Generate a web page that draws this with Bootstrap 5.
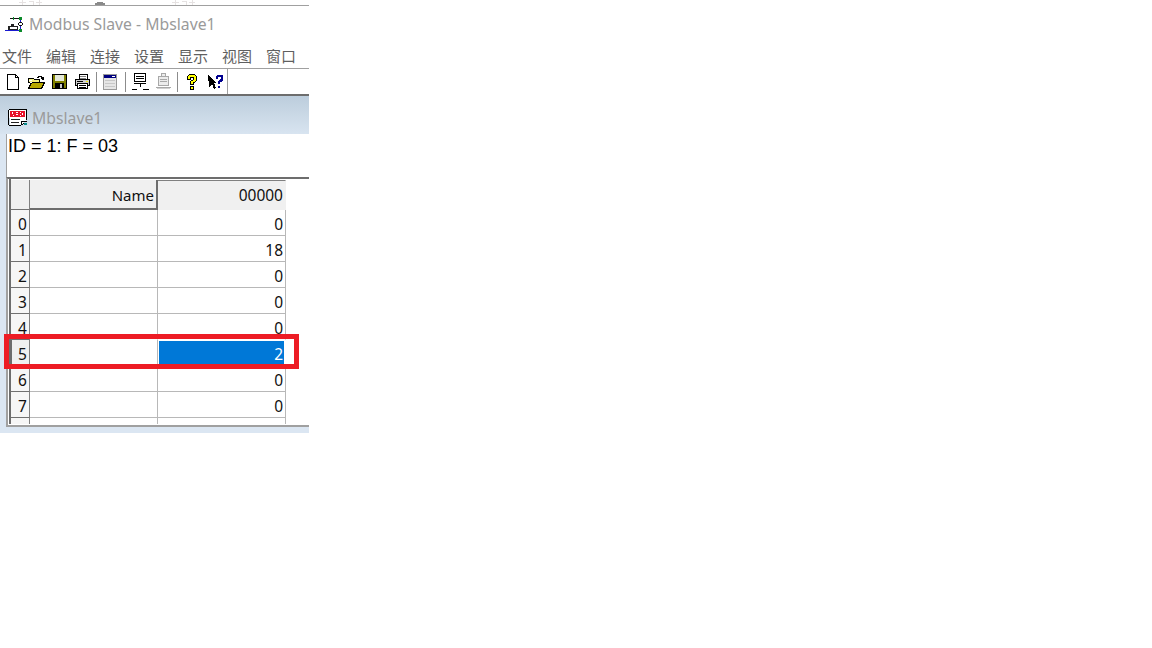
<!DOCTYPE html>
<html lang="en">
<head>
  <meta charset="UTF-8">
  <meta name="viewport" content="width=device-width, initial-scale=1.0">
  <title>Modbus Slave - Mbslave1</title>
  <link href="https://cdn.jsdelivr.net/npm/bootstrap@5.3.3/dist/css/bootstrap.min.css" rel="stylesheet">
  <script src="https://cdn.jsdelivr.net/npm/bootstrap@5.3.3/dist/js/bootstrap.bundle.min.js"></script>
  <style>
    body { background-color: #fff; overflow: hidden; }
    svg { display: block; shape-rendering: crispEdges; flex: none; }
    .app-win { width: 309px; height: 433px; position: relative; overflow: hidden; background: #fff; }
    .top-strip { height: 5px; overflow: hidden; }
    .title-row { height: 37px; border-top: 1px solid #a0a0a0; padding-left: 5px; gap: 5px; color: #9a9a9a; font: 15.750px "Noto Sans", sans-serif; }
    .menu-row { height: 26px; padding-left: 2px; gap: 14px; color: #5f5f5f; font: 15px "Noto Sans CJK SC", sans-serif; }
    .tool-row { height: 28px; border-top: 1px solid #a0a0a0; border-bottom: 2px solid #6d6d6d; background: #fff; padding-left: 6px; }
    .tool-bar { height: 100%; border-right: 1px solid #a0a0a0; width: 222px; }
    .tool-sep { width: 1px; height: 20px; background: #8c8c8c; flex: none; }
    .gap-5px { margin-left: 5px; }
    .gap-6px { margin-left: 6px; }
    .gap-7px { margin-left: 7px; }
    .gap-8px { margin-left: 8px; }
    .gap-10px { margin-left: 10px; }
    .mdi-area { height: 337px; background: #dbe6f2; padding-left: 6px; }
    .child-title { height: 38px; margin-left: -6px; padding: 6px 0 0 8px; gap: 4px; background: linear-gradient(#bccddc, #d8e4f0); color: #9b9b9b; font: 15.750px "Noto Sans", sans-serif; }
    .id-panel { height: 43px; background: #fff; padding: 1px 0 0 1px; border-left: 1px solid #a0a0a0; color: #000; font: 18px/22px "Liberation Sans", sans-serif; }
    .grid-box { height: 250px; background: #fff; border-top: 2px solid #6d6d6d; border-left: 2px solid #a0a0a0; border-bottom: 2px solid #a0a0a0; padding-left: 1px; }
    .grid-inner { height: 245px; padding-top: 1px; border-left: 2px solid #6d6d6d; overflow: hidden; }
    .reg-table { table-layout: fixed; width: 275px; border-collapse: separate; border-spacing: 0; font: 15.500px "Noto Sans", sans-serif; color: #111; }
    .col-head { width: 19px; }
    .col-val { width: 128px; }
    .reg-table th, .reg-table td { height: 26px; padding: 4px 2px 0 0; text-align: right; font-weight: 400; border-bottom: 1px solid #b8b8b8; border-right: 1px solid #b8b8b8; overflow: hidden; line-height: 1; vertical-align: middle; }
    .reg-table thead th { height: 30px; padding-top: 0; background: #f0f0f0; border-bottom: 0; border-right: 0; }
    .reg-table .row-head { background: #f6f6f6; text-align: center; padding: 4px 0 0 5px; border-right: 1px solid #808080; border-bottom-color: #707070; }
    .reg-table thead .row-head { background: #f0f0f0; border-right: 1px solid #808080; border-bottom: 1px solid #707070; }
    .reg-table thead .name-head { font-size: 15px; padding-top: 2px; border-right: 2px solid #6d6d6d; border-bottom: 2px solid #6d6d6d; }
    .reg-table thead .value-head { border-top: 1px solid #808080; border-right: 1px solid #f0f0f0; }
    .reg-table .pre-sel td { border-bottom-color: #fff; }
    .reg-table .sel-row td, .reg-table .sel-row th { border-bottom-color: #fff; }
    .reg-table .sel-row .row-head { background: #f0f0f0; box-shadow: inset 1px 0 0 #6d6d6d; border-bottom-color: #707070; }
    .reg-table .cell-sel { background: #0078d7; background-clip: padding-box; color: #fff; box-shadow: inset 0 0 0 1px #fff; border-right-color: #fff; }
    .red-mark { position: absolute; left: 4px; top: 334px; width: 295px; height: 35px; border: 5px solid #ed1c24; pointer-events: none; }
  </style>
</head>
<body>
  <div class="app-win">
    <div class="top-strip">
      <svg width="200" height="5" viewBox="0 0 200 5">
        <path d="M19 2h7M22 0v5M29 1h4v4M36 2h6M39 0v5M172 2h7M175 0v5M182 1h4v4M189 2h6M192 0v5" stroke="#e6e2e2" fill="none"/>
        <path d="M95 3h10v2H95zM97 2h6v1h-6z" fill="#8a8a8a"/>
      </svg>
    </div>

    <div class="title-row d-flex align-items-center">
      <svg width="19" height="19" viewBox="0 0 19 19">
        <path d="M5 3h9v1H5z" fill="#111"/>
        <path d="M8 2h1v3H8z" fill="#0a8a2a"/>
        <path d="M14 2h3v3h-3zM14 14h3v3h-3z" fill="#0a8a2a"/>
        <path d="M15 5h1v2h-1zM15 11h1v3h-1z" fill="#1a1ad0"/>
        <path d="M14 7h3v1h-3zM14 10h3v1h-3zM13 8h1v2h-1zM17 8h1v2h-1z" fill="#111"/>
        <path d="M6 9h3v2H6zM3 11h10v4H3z" fill="#222"/>
        <path d="M5 12h7v2H5z" fill="#fff"/>
        <path d="M0 15h14v1H0z" fill="#1a1ad0"/>
      </svg>
      <span>Modbus Slave - Mbslave1</span>
    </div>

    <div class="menu-row d-flex align-items-center">
      <span>文件</span><span>编辑</span><span>连接</span><span>设置</span><span>显示</span><span>视图</span><span>窗口</span>
    </div>

    <div class="tool-row">
      <div class="tool-bar d-flex align-items-center">
        <!-- new -->
        <svg width="14" height="16" viewBox="0 0 14 16"><path d="M1.500.5h8l3 3v12h-11z" fill="#fff" stroke="#000"/><path d="M9.500.5v3h3" fill="none" stroke="#000"/></svg>
        <!-- open -->
        <svg class="gap-8px" width="17" height="14" viewBox="0 0 17 14"><path d="M.5 3.500h5l1 1h5v3h-11z" fill="#f4f080" stroke="#000"/><path d="M.5 13.500l3-6h13l-3 6z" fill="#b8a800" stroke="#000"/><path d="M1 5h3v1H1zM2 7h2v1H2z" fill="#fff"/><path d="M9 2h1V1h3v1h1v2h1M13 3h3M15 2v3" fill="none" stroke="#000"/></svg>
        <!-- save -->
        <svg class="gap-7px" width="15" height="15" viewBox="0 0 15 15"><path d="M0 0h15v15H0z" fill="#000"/><path d="M1 1h13v13H1z" fill="#808000"/><path d="M3 1h9v6H3z" fill="#e4e8d8"/><path d="M3 9h9v6H3z" fill="#000"/><path d="M8 10h2v4H8z" fill="#c8c8c8"/></svg>
        <!-- print -->
        <svg class="gap-7px" width="17" height="15" viewBox="0 0 17 15"><path d="M5.500.5h8v5h-8z" fill="#fff" stroke="#000"/><path d="M6 2h6M6 4h6" stroke="#808080"/><path d="M1.500 5.500h14v6h-14z" fill="#d0d0d0" stroke="#000"/><path d="M3.500 9.500h10v5h-10z" fill="#fff" stroke="#000"/><path d="M3 7h6M5 11h7M5 13h7" stroke="#000"/><path d="M12 7h2" stroke="#f2f200"/></svg>
        <span class="tool-sep gap-5px"></span>
        <!-- child window -->
        <svg class="gap-6px" width="14" height="16" viewBox="0 0 14 16"><path d="M.5.500h13v15H.5z" fill="#e6e6e6" stroke="#9a9a9a"/><path d="M1 1h12v3H1z" fill="#000080"/><path d="M9 2h3v1H9z" fill="#fff"/><path d="M2 6h10M2 9h10M2 12h10" stroke="#c8c8c8"/></svg>
        <span class="tool-sep gap-8px"></span>
        <!-- connect -->
        <svg class="gap-6px" width="17" height="17" viewBox="0 0 17 17"><path d="M2.500.5h11v8h-11z" fill="#fff" stroke="#000"/><path d="M4 3h8M4 5h8" stroke="#000"/><path d="M2 10h12" stroke="#000"/><path d="M8 11v3" stroke="#000"/><path d="M0 16h5M11 16h6" stroke="#000"/></svg>
        <!-- disconnect -->
        <svg class="gap-6px" width="17" height="17" viewBox="0 0 17 17"><path d="M6.500.5h4v3h-4zM3.500 3.500h10v9h-10z" fill="#ececec" stroke="#a8a8a8"/><path d="M5 6h7M5 8h7" stroke="#a8a8a8"/><path d="M1 14h15" stroke="#a8a8a8"/><path d="M2 15h13v1H2z" fill="#d0d0d0"/></svg>
        <span class="tool-sep gap-5px"></span>
        <!-- help -->
        <svg class="gap-8px" width="12" height="16" viewBox="0 0 12 16"><path d="M1.500 5.500v-3l2-2h5l2 2v4l-2 2h-1v2h-3v-3l3-2v-2h-3v2z" fill="#ff0" stroke="#000"/><path d="M4.500 12.500h3v3h-3z" fill="#ff0" stroke="#000"/></svg>
        <!-- what's this -->
        <svg class="gap-10px" width="16" height="16" viewBox="0 0 16 16"><path d="M0 1l9 8H6l2 5-2 1-2-5-3 3z" fill="#000"/><path d="M8 5V2l1-1h5l1 1v4l-2 2h-1v2h-2V7l3-2V3h-3v2z" fill="#000090"/><path d="M10 12h2v2h-2z" fill="#000090"/></svg>
      </div>
    </div>

    <div class="mdi-area">
      <div class="child-title d-flex align-items-center">
        <svg width="20" height="20" viewBox="0 0 20 20"><path d="M1 2h17v10l-5 6H2z" fill="#fff"/><path d="M1 1h18v1H1zM0 2h1v15H0zM18 2h1v10h-1zM1 17h12v1H1zM13 13h6v1h-6zM13 14h1v3h-1zM14 16h1v1h-1zM15 15h1v1h-1z" fill="#000"/><path d="M2 3h15v6H2z" fill="#e8102a"/><path d="M4 4h1v2H4zM8 4h2v1H8zM8 6h2v1H8zM12 4h1v1h-1zM14 5h1v2h-1zM12 7h1v1h-1zM5 7h1v1H5z" fill="#fff"/><path d="M3 11h9v1H3zM3 14h8v1H3z" fill="#222"/><path d="M16 15h3v2h-3z" fill="#0a8a8a"/></svg>
        <span>Mbslave1</span>
      </div>
      <div class="id-panel">ID = 1: F = 03</div>
      <div class="grid-box">
        <div class="grid-inner">
          <table class="reg-table">
            <colgroup><col class="col-head"><col class="col-val"><col class="col-val"></colgroup>
            <thead>
              <tr><th class="row-head"></th><th class="name-head">Name</th><th class="value-head">00000</th></tr>
            </thead>
            <tbody>
              <tr><th class="row-head">0</th><td></td><td>0</td></tr>
              <tr><th class="row-head">1</th><td></td><td>18</td></tr>
              <tr><th class="row-head">2</th><td></td><td>0</td></tr>
              <tr><th class="row-head">3</th><td></td><td>0</td></tr>
              <tr class="pre-sel"><th class="row-head">4</th><td></td><td>0</td></tr>
              <tr class="sel-row"><th class="row-head">5</th><td></td><td class="cell-sel">2</td></tr>
              <tr><th class="row-head">6</th><td></td><td>0</td></tr>
              <tr><th class="row-head">7</th><td></td><td>0</td></tr>
              <tr><th class="row-head"></th><td></td><td></td></tr>
            </tbody>
          </table>
        </div>
      </div>
    </div>

    <div class="red-mark"></div>
  </div>
</body>
</html>
